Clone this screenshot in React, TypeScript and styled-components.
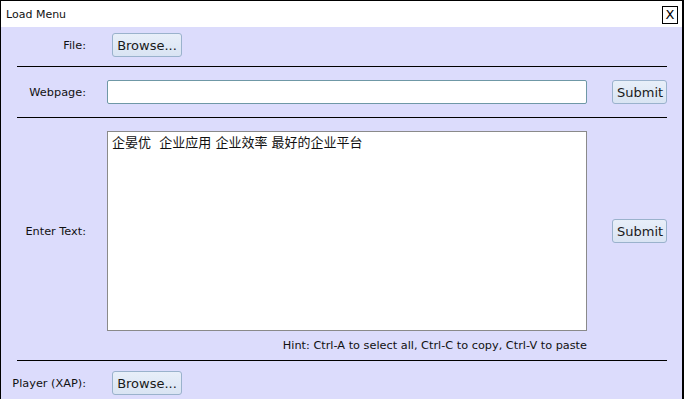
import React from 'react'
import styled, { createGlobalStyle } from 'styled-components'

const GlobalStyle = createGlobalStyle`
    html, body {
        margin: 0;
        padding: 0;
        background: #ffffff;
    }
    body {
        font-family: "DejaVu Sans", Verdana, sans-serif;
    }
`

const StyledWindow = styled.div`
    width: 684px;
    height: 399px;
    overflow: hidden;
    box-sizing: border-box;
    border: 1px solid #000000;
    border-right-width: 2px;
    border-bottom: none;
    background-color: #dcdcfc;
    color: #111111;
`

const StyledTitleBar = styled.div`
    height: 26px;
    display: flex;
    align-items: center;
    justify-content: space-between;
    padding: 0 4px 0 5px;
    background-color: #ffffff;
    font-size: 11px;
`

const StyledClose = styled.button`
    width: 16px;
    height: 18px;
    padding: 0;
    margin-top: 2px;
    border: 1px solid #000000;
    background-color: #ffffff;
    font-family: "DejaVu Sans", sans-serif;
    font-size: 13px;
    line-height: 16px;
    color: #000000;
`

const StyledRow = styled.div<{ $height?: number }>`
    display: grid;
    grid-template-columns: 106px 480px auto;
    align-items: center;
    height: ${(p) => (p.$height ? `${p.$height}px` : 'auto')};
`

const StyledLabel = styled.div`
    padding-right: 21px;
    text-align: right;
    font-size: 11.3px;
`

const StyledButton = styled.button`
    height: 24px;
    padding: 0 4px;
    border: 1px solid #9ab2cc;
    border-radius: 3px;
    background: linear-gradient(#e8eff9, #d9e4f3);
    font-family: "DejaVu Sans", sans-serif;
    font-size: 13px;
    color: #1a1a1a;
    justify-self: start;
`

const StyledBrowse = styled(StyledButton)`
    width: 70px;
    margin-left: 5px;
`

const StyledSubmit = styled(StyledButton)`
    width: 55px;
    margin-left: 25px;
`

const StyledDivider = styled.hr<{ $top?: number }>`
    width: 650px;
    margin: ${(p) => p.$top ?? 0}px 0 0 16px;
    border: none;
    border-top: 1px solid #000000;
    height: 0;
`

const StyledInput = styled.input`
    width: 480px;
    height: 24px;
    box-sizing: border-box;
    border: 1px solid #6f98a6;
    border-radius: 2px;
    background: #ffffff;
    outline: none;
`

const StyledTextArea = styled.textarea`
    width: 480px;
    height: 200px;
    box-sizing: border-box;
    margin-top: 13px;
    padding: 3px 4px;
    border: 1px solid #8a8a8a;
    background: #ffffff;
    resize: none;
    outline: none;
    font-family: "DejaVu Sans", "Noto Sans CJK SC", sans-serif;
    font-size: 13px;
    line-height: 16px;
    color: #111111;
`

const StyledHint = styled.div`
    grid-column: 2;
    padding: 8px 0 7px;
    text-align: right;
    font-size: 11.3px;
    line-height: 14px;
`

export default function App() {
    return (
        <>
            <GlobalStyle />
            <StyledWindow>
                <StyledTitleBar>
                    <span>Load Menu</span>
                    <StyledClose type="button">X</StyledClose>
                </StyledTitleBar>
                <StyledRow $height={36}>
                    <StyledLabel>File:</StyledLabel>
                    <StyledBrowse type="button">Browse...</StyledBrowse>
                </StyledRow>
                <StyledDivider $top={3} />
                <StyledRow $height={50}>
                    <StyledLabel>Webpage:</StyledLabel>
                    <StyledInput type="text" />
                    <StyledSubmit type="button">Submit</StyledSubmit>
                </StyledRow>
                <StyledDivider />
                <StyledRow>
                    <StyledLabel style={{ paddingTop: 13 }}>Enter Text:</StyledLabel>
                    <StyledTextArea defaultValue="企晏优  企业应用 企业效率 最好的企业平台" />
                    <StyledSubmit type="button" style={{ marginTop: 13 }}>
                        Submit
                    </StyledSubmit>
                    <StyledHint>
                        Hint: Ctrl-A to select all, Ctrl-C to copy, Ctrl-V to paste
                    </StyledHint>
                </StyledRow>
                <StyledDivider />
                <StyledRow $height={44}>
                    <StyledLabel>Player (XAP):</StyledLabel>
                    <StyledBrowse type="button">Browse...</StyledBrowse>
                </StyledRow>
            </StyledWindow>
        </>
    )
}
